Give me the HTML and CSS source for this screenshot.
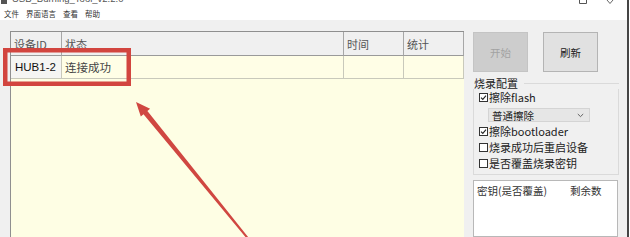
FILE: index.html
```html
<!DOCTYPE html>
<html lang="zh-CN">
<head>
<meta charset="utf-8">
<title>USB_Burning_Tool</title>
<link rel="stylesheet" href="styles.css">
</head>
<body>
<div class="window">
  <div class="titlebar">
    <span class="app-icon"></span>
    <span class="title">USB_Burning_Tool_v2.2.0</span>
    <span class="spacer"></span>
    <svg class="ctl" width="40" height="8" viewBox="0 0 40 8">
      <path d="M3.5 0 V3.5 H10.5 V0" fill="none" stroke="#555" stroke-width="1"/>
      <path d="M31 0 L34 3.5 M37 0 L34 3.5" fill="none" stroke="#666" stroke-width="1"/>
    </svg>
  </div>
  <div class="menubar">
    <span class="menu">文件</span>
    <span class="menu">界面语言</span>
    <span class="menu">查看</span>
    <span class="menu">帮助</span>
  </div>
  <div class="client">
    <div class="table">
      <div class="grid">
        <div class="th">设备ID</div>
        <div class="th">状态</div>
        <div class="th">时间</div>
        <div class="th">统计</div>
        <div class="td rowhead">HUB1-2</div>
        <div class="td status">连接成功</div>
        <div class="td"></div>
        <div class="td"></div>
      </div>
    </div>
    <div class="side">
      <div class="buttons">
        <div class="btn disabled">开始</div>
        <div class="btn">刷新</div>
      </div>
      <div class="group-head"><span class="group-label">烧录配置</span><span class="group-line"></span></div>
      <div class="group-body">
        <div class="check first"><svg class="box" width="9" height="9" viewBox="0 0 9 9"><rect x="0.5" y="0.5" width="8" height="8" fill="#fff" stroke="#333"/><path d="M2 4.6 L3.8 6.4 L7 2.6" fill="none" stroke="#222" stroke-width="1.1"/></svg><span>擦除flash</span></div>
        <div class="select"><span>普通擦除</span><svg width="7" height="5" viewBox="0 0 7 5"><path d="M0.8 1 L3.5 3.6 L6.2 1" fill="none" stroke="#555" stroke-width="0.9"/></svg></div>
        <div class="check second"><svg class="box" width="9" height="9" viewBox="0 0 9 9"><rect x="0.5" y="0.5" width="8" height="8" fill="#fff" stroke="#333"/><path d="M2 4.6 L3.8 6.4 L7 2.6" fill="none" stroke="#222" stroke-width="1.1"/></svg><span>擦除bootloader</span></div>
        <div class="check"><svg class="box" width="9" height="9" viewBox="0 0 9 9"><rect x="0.5" y="0.5" width="8" height="8" fill="#fff" stroke="#333"/></svg><span>烧录成功后重启设备</span></div>
        <div class="check"><svg class="box" width="9" height="9" viewBox="0 0 9 9"><rect x="0.5" y="0.5" width="8" height="8" fill="#fff" stroke="#333"/></svg><span>是否覆盖烧录密钥</span></div>
      </div>
      <div class="keylist">
        <div class="key-head"><span class="key-col">密钥(是否覆盖)</span><span>剩余数</span></div>
      </div>
    </div>
  </div>
  <svg class="annot" width="630" height="237" viewBox="0 0 630 237">
    <rect x="5.25" y="50.25" width="123.5" height="33.5" fill="none" stroke="#d2453f" stroke-width="4.5"/>
    <polygon points="136,102 140.8,116.4 143.5,114.2 247.6,239.6 249.2,238.4 147.4,111.1 150.1,108.8" fill="#d04741"/>
  </svg>
</div>
</body>
</html>
```

FILE: styles.css
```css
html, body {
  margin: 0;
  padding: 0;
  background: #fff;
}
body {
  width: 630px;
  height: 237px;
  overflow: hidden;
  font-family: "Noto Sans CJK SC", "Noto Sans", sans-serif;
}
.window {
  position: relative;
  width: 627px;
  height: 237px;
  border-right: 2px solid #454545;
  display: flex;
  flex-direction: column;
  background: #f0f0f0;
  overflow: hidden;
}
.titlebar {
  height: 8px;
  flex: none;
  background: #fff;
  display: flex;
  align-items: flex-start;
  overflow: hidden;
}
.app-icon {
  width: 6px;
  height: 4px;
  margin-left: 1px;
  background: #555;
}
.title {
  margin-left: 5px;
  margin-top: -7px;
  font-family: "Liberation Sans", sans-serif;
  font-size: 9.5px;
  line-height: 11px;
  color: #555;
}
.spacer { flex: 1; }
.ctl { margin-right: 0; margin-left: auto; position: relative; left: -11px; }
.menubar {
  height: 12px;
  flex: none;
  background: #fff;
  display: flex;
  align-items: center;
  padding-left: 4px;
  gap: 7px;
}
.menu {
  font-size: 7.5px;
  line-height: 10px;
  color: #333;
}
.client {
  flex: 1;
  display: flex;
  align-items: stretch;
  padding: 11px 0 0 10px;
  min-height: 0;
}
.table {
  width: 454px;
  box-sizing: border-box;
  border-left: 1px solid #8f8f8f;
  border-top: 1px solid #8f8f8f;
  background: #fefee4;
  flex: none;
}
.grid {
  display: grid;
  grid-template-columns: 51px 282px 60px 60px;
  grid-template-rows: 24px 23px;
}
.th, .td {
  box-sizing: border-box;
  display: flex;
  align-items: center;
  padding-left: 3px;
  white-space: nowrap;
}
.th {
  background: #f0f0f0;
  border-right: 1px solid #a7a7a7;
  border-bottom: 1px solid #9a9a9a;
  font-size: 11px;
  color: #555;
}
.td {
  border-right: 1px solid #c9c9bb;
  border-bottom: 1px solid #c9c9bb;
  background: #fffee6;
}
.rowhead {
  background: #f5f5f3;
  font-family: "Liberation Sans", sans-serif;
  font-size: 11.5px;
  color: #111;
  padding-left: 4px;
}
.status {
  font-size: 11.5px;
  color: #444;
  padding-left: 3px;
}
.side {
  width: 146px;
  margin-left: 9px;
  padding-top: 1px;
  display: flex;
  flex-direction: column;
}
.buttons {
  display: flex;
  gap: 15px;
}
.btn {
  width: 55px;
  height: 40px;
  box-sizing: border-box;
  display: flex;
  align-items: center;
  justify-content: center;
  font-size: 10.5px;
  color: #222;
  background: #e1e1e1;
  border: 1px solid #b4b4b4;
}
.btn.disabled {
  background: #cdcdcd;
  border-color: #c4c4c4;
  color: #a2a2a2;
}
.group-head {
  margin-top: 6px;
  display: flex;
  align-items: center;
  height: 11px;
}
.group-label {
  font-size: 11px;
  line-height: 11px;
  color: #222;
  padding-left: 1px;
  padding-right: 6px;
}
.group-line {
  flex: 1;
  border-top: 1px solid #dadada;
}
.group-body {
  border: 1px solid #dadada;
  border-top: none;
  padding: 0 0 3px 5px;
  display: flex;
  flex-direction: column;
}
.check {
  display: flex;
  align-items: center;
  height: 16px;
  font-size: 11px;
  color: #222;
  white-space: nowrap;
}
.check .box {
  flex: none;
  margin-right: 1px;
}
.check.first { margin-top: 0; }
.check.second { margin-top: 1px; }
.select {
  margin-top: 3px;
  margin-left: 9px;
  width: 102px;
  height: 14px;
  box-sizing: border-box;
  background: #e6e6e6;
  border: 1px solid #d4d4d4;
  display: flex;
  align-items: center;
  justify-content: space-between;
  padding: 0 5px 0 3px;
  font-size: 10.5px;
  color: #222;
}
.keylist {
  margin-top: 5px;
  flex: 1;
  background: #fff;
  border: 1px solid #b8b8b8;
  margin-right: 1px;
}
.key-head {
  display: flex;
  padding: 3px 0 0 3px;
  font-size: 10.5px;
  line-height: 14px;
  color: #333;
  white-space: nowrap;
}
.key-col {
  width: 93px;
}
.annot {
  position: absolute;
  left: 0;
  top: 0;
  pointer-events: none;
}
```
